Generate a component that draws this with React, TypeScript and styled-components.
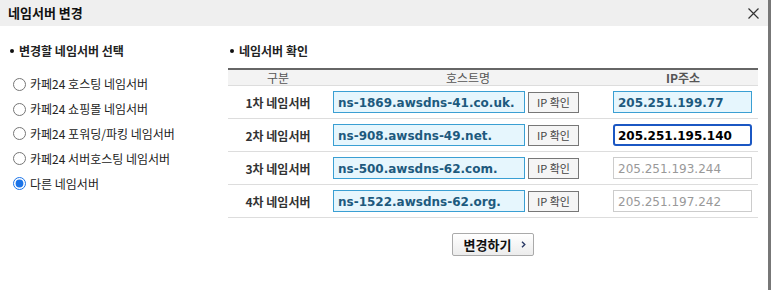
import React from "react";
import styled, { createGlobalStyle } from "styled-components";

const Global = createGlobalStyle`
  html, body { margin: 0; padding: 0; background: #fff; }
  body { font-family: "Noto Sans CJK KR", "Noto Sans", sans-serif; color: #333; }
  * { box-sizing: border-box; }
`;

const Frame = styled.div`
  width: 771px;
  height: 290px;
  border-right: 3px solid #777;
  background: #fff;
  overflow: hidden;
`;

const TitleBar = styled.div`
  height: 26px;
  background: #efefef;
  display: flex;
  align-items: center;
  justify-content: space-between;
  padding: 0 9px 0 8px;
`;

const Title = styled.h1`
  margin: 0;
  font-size: 13px;
  font-weight: 700;
  color: #111;
  line-height: 16px;
`;

const CloseBtn = styled.button`
  border: 0;
  background: none;
  padding: 0;
  width: 12px;
  height: 12px;
  display: flex;
  align-items: center;
  justify-content: center;
  cursor: pointer;
`;

const Body = styled.div`
  display: flex;
  padding-top: 17px;
`;

const LeftPane = styled.div`
  width: 228px;
  padding-left: 10px;
`;

const RightPane = styled.div`
  width: 530px;
  display: flex;
  flex-direction: column;
`;

const SectionTitle = styled.h2<{ $indent?: number }>`
  margin: 0;
  font-size: 12px;
  font-weight: 700;
  color: #222;
  line-height: 16px;
  display: flex;
  align-items: center;
  gap: 5px;
  padding-left: ${(p) => p.$indent ?? 0}px;
  &::before {
    content: "";
    width: 4px;
    height: 4px;
    border-radius: 50%;
    background: #111;
  }
`;

const RadioList = styled.div`
  display: flex;
  flex-direction: column;
  margin-top: 13px;
`;

const RadioRow = styled.label`
  height: 24.8px;
  display: flex;
  align-items: center;
  gap: 4px;
  font-size: 12px;
  color: #222;
  line-height: 14px;
`;

const Radio = styled.input`
  margin: 0 0 0 3px;
  width: 13px;
  height: 13px;
  accent-color: #1a73e8;
`;

const Table = styled.div`
  margin-top: 9px;
  display: grid;
  grid-template-columns: 100px 280px 150px;
  border-top: 2px solid #666;
`;

const HeadCell = styled.div<{ $bold?: boolean }>`
  height: 16px;
  background: #f3f3f3;
  border-bottom: 1px solid #ddd;
  font-size: 12px;
  font-weight: ${(p) => (p.$bold ? 700 : 400)};
  color: #555;
  line-height: 15px;
  text-align: center;
`;

const Cell = styled.div`
  height: 33px;
  border-bottom: 1px solid #ddd;
  display: flex;
  align-items: center;
`;

const LabelCell = styled(Cell)`
  justify-content: center;
  font-size: 12px;
  font-weight: 700;
  color: #333;
`;

const HostCell = styled(Cell)`
  padding-left: 5px;
  gap: 3px;
`;

const IpCell = styled(Cell)`
  padding-left: 5px;
`;

const TextBox = styled.input<{ $variant: "filled" | "focus" | "empty"; $w: number }>`
  width: ${(p) => p.$w}px;
  height: 22px;
  margin: 0;
  padding: 2px 4px 0;
  font-family: "DejaVu Sans", "Noto Sans CJK KR", sans-serif;
  font-size: 12px;
  outline: none;
  ${(p) =>
    p.$variant === "filled"
      ? `background:#e6f6fd;border:1px solid #3a9fd3;color:#1d5a7e;font-weight:700;`
      : p.$variant === "focus"
      ? `background:#fff;border:2px solid #1b57c3;border-radius:3px;color:#000;font-weight:700;padding-left:3px;caret-color:#000;`
      : `background:#fff;border:1px solid #ccc;color:#999;font-weight:400;`}
  &::placeholder { color: #999; opacity: 1; }
`;

const SmallBtn = styled.button`
  width: 51px;
  height: 21px;
  margin: 0;
  padding: 0;
  background: #f5f5f5;
  border: 1px solid #777;
  font-family: "Noto Sans CJK KR", sans-serif;
  font-size: 11px;
  color: #444;
  line-height: 13px;
`;

const Actions = styled.div`
  display: flex;
  justify-content: center;
  margin-top: 15px;
`;

const SubmitBtn = styled.button`
  width: 82px;
  height: 23px;
  padding: 0 0 0 4px;
  border: 1px solid #aaa;
  border-radius: 2px;
  background: linear-gradient(#fff, #ececec);
  display: flex;
  align-items: center;
  justify-content: center;
  gap: 10px;
  font-family: "Noto Sans CJK KR", sans-serif;
  font-size: 13px;
  font-weight: 700;
  color: #111;
  line-height: 16px;
`;

const rows = [
  { label: "1차 네임서버", host: "ns-1869.awsdns-41.co.uk.", ip: "205.251.199.77", variant: "filled" as const },
  { label: "2차 네임서버", host: "ns-908.awsdns-49.net.", ip: "205.251.195.140", variant: "focus" as const },
  { label: "3차 네임서버", host: "ns-500.awsdns-62.com.", ip: "205.251.193.244", variant: "empty" as const },
  { label: "4차 네임서버", host: "ns-1522.awsdns-62.org.", ip: "205.251.197.242", variant: "empty" as const },
];

const options = [
  "카페24 호스팅 네임서버",
  "카페24 쇼핑몰 네임서버",
  "카페24 포워딩/파킹 네임서버",
  "카페24 서버호스팅 네임서버",
  "다른 네임서버",
];

export default function App() {
  const focusRef = React.useRef<HTMLInputElement>(null);
  React.useEffect(() => {
    const el = focusRef.current;
    if (el) {
      el.focus();
      const n = el.value.length;
      el.setSelectionRange(n, n);
    }
  }, []);
  return (
    <>
      <Global />
      <Frame>
        <TitleBar>
          <Title>네임서버 변경</Title>
          <CloseBtn aria-label="닫기">
            <svg width="11" height="11" viewBox="0 0 11 11">
              <path d="M0.5 0.5 L10.5 10.5 M10.5 0.5 L0.5 10.5" stroke="#333" strokeWidth="1.2" fill="none" />
            </svg>
          </CloseBtn>
        </TitleBar>
        <Body>
          <LeftPane>
            <SectionTitle>변경할 네임서버 선택</SectionTitle>
            <RadioList>
              {options.map((o, i) => (
                <RadioRow key={o}>
                  <Radio type="radio" name="ns" defaultChecked={i === 4} />
                  {o}
                </RadioRow>
              ))}
            </RadioList>
          </LeftPane>
          <RightPane>
            <SectionTitle $indent={2}>네임서버 확인</SectionTitle>
            <Table>
              <HeadCell>구분</HeadCell>
              <HeadCell>호스트명</HeadCell>
              <HeadCell $bold>IP주소</HeadCell>
              {rows.map((r) => (
                <React.Fragment key={r.label}>
                  <LabelCell>{r.label}</LabelCell>
                  <HostCell>
                    <TextBox $variant="filled" $w={192} defaultValue={r.host} />
                    <SmallBtn>IP 확인</SmallBtn>
                  </HostCell>
                  <IpCell>
                    {r.variant === "empty" ? (
                      <TextBox $variant="empty" $w={139} placeholder={r.ip} />
                    ) : (
                      <TextBox
                        $variant={r.variant}
                        $w={139}
                        defaultValue={r.ip}
                        ref={r.variant === "focus" ? focusRef : undefined}
                      />
                    )}
                  </IpCell>
                </React.Fragment>
              ))}
            </Table>
            <Actions>
              <SubmitBtn>
                변경하기
                <svg width="5" height="7" viewBox="0 0 5 7">
                  <path d="M1 0.8 L3.8 3.5 L1 6.2" stroke="#2a3a66" strokeWidth="1.4" fill="none" />
                </svg>
              </SubmitBtn>
            </Actions>
          </RightPane>
        </Body>
      </Frame>
    </>
  );
}
